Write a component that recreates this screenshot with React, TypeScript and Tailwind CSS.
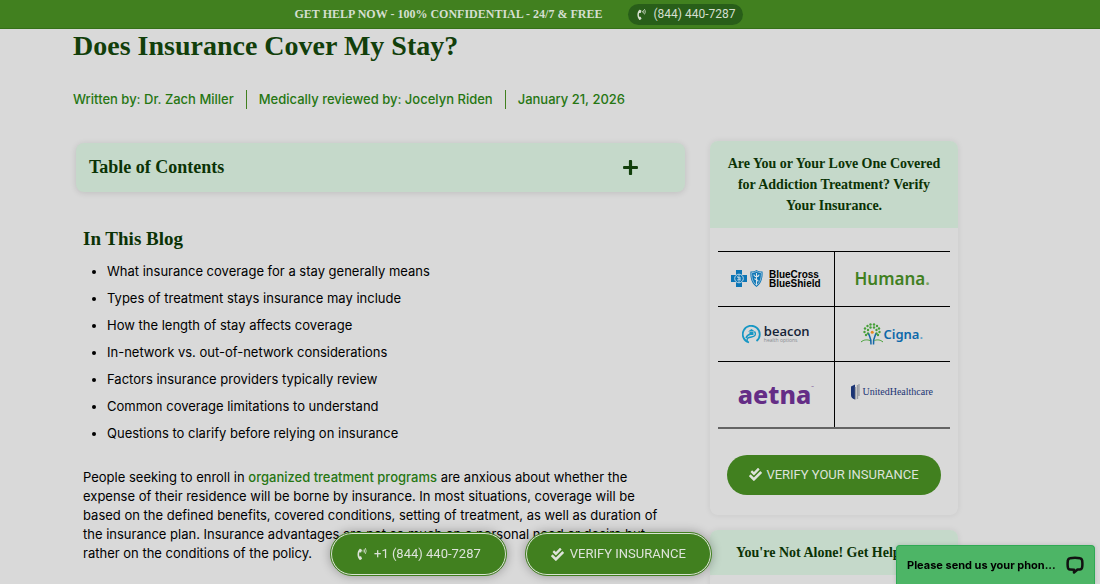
import type { ReactNode } from "react";
import { FaCheckDouble, FaPhoneVolume, FaPlus } from "react-icons/fa";

const topics = [
  "What insurance coverage for a stay generally means",
  "Types of treatment stays insurance may include",
  "How the length of stay affects coverage",
  "In-network vs. out-of-network considerations",
  "Factors insurance providers typically review",
  "Common coverage limitations to understand",
  "Questions to clarify before relying on insurance",
];

function BlueCross() {
  return (
    <div className="flex items-center gap-[5px]">
      <svg width="33" height="18" viewBox="0 0 33 18" aria-hidden="true">
        <path d="M5 0h6v5h5v7h-5v5H5v-5H0V5h5z" fill="#0b75b5" />
        <circle cx="8" cy="8.500" r="4.300" fill="#0b75b5" stroke="#c5d9e5" strokeWidth="1" />
        <path d="M8 5v7M6 7l4 1M6 10l4-1M6.500 6.500l3 4" stroke="#c5d9e5" strokeWidth=".8" fill="none" />
        <path d="M19.500 1.500C22 1.500 24 1 25.500 0c1.500 1 3.500 1.500 6 1.500.6 6-1 12-6 15.500-5-3.500-6.600-9.500-6-15.500z" fill="#0b75b5" />
        <path d="M20.700 2.600c2 0 3.500-.5 4.800-1.200 1.300.7 2.800 1.200 4.800 1.200.3 5-1 9.700-4.800 12.800-3.800-3.100-5.100-7.800-4.800-12.800z" fill="none" stroke="#c5d9e5" strokeWidth=".7" />
        <path d="M25.500 3v12M23 4.500c0 3 5 2.500 5 0M23.500 8.500c1 2 4 .5 3.500 3" stroke="#d9e3e9" strokeWidth="1.100" fill="none" />
      </svg>
      <div className="font-['Liberation_Sans',sans-serif] text-[10px] leading-[9px] font-bold text-black">
        BlueCross
        <br />
        BlueShield
      </div>
    </div>
  );
}

function Beacon() {
  return (
    <div className="flex items-center gap-[3px]">
      <svg width="19" height="19" viewBox="0 0 19 19" fill="none" aria-hidden="true">
        <path d="M7 17.500A8.500 8.500 0 1 1 14.500 16" stroke="#1797c4" strokeWidth="1.800" />
        <path d="M5.500 17c-1.500-4 .5-4.500 4-5 4-.5 5-3 3-5.500M4 13c1-3 2.500-3.500 5-4" stroke="#1797c4" strokeWidth="1.400" />
        <path d="M6 6.500 9.500 4 13 6.500zM7.500 7h4v3h-4z" fill="#1797c4" />
      </svg>
      <div className="flex flex-col">
        <span className="font-['Open_Sans',sans-serif] text-[13px] leading-[12px] font-semibold text-[#142337]">beacon</span>
        <span className="font-['Open_Sans',sans-serif] text-[5px] leading-[6px] text-[#858b90]">health options</span>
      </div>
    </div>
  );
}

const leaves = [
  [2, 9], [2.500, 5.500], [5, 3], [8, 1.500], [11.500, 1.500], [14.500, 3], [16.500, 5.500], [17, 9],
  [5.500, 7], [8, 4.500], [11.500, 4.500], [14, 7], [5.500, 10.500], [14, 10.500], [3.500, 12], [15.500, 12],
];

function Cigna() {
  return (
    <div className="flex items-center">
      <svg width="22" height="22" viewBox="0 0 22 22" aria-hidden="true">
        <g transform="translate(1.500 0)">
          {leaves.map(([x, y]) => (
            <circle key={`${x}-${y}`} cx={x} cy={y} r="1.200" fill="#46a038" />
          ))}
          <circle cx="9.700" cy="9.300" r="1.500" fill="#e68a25" />
        </g>
        <path d="M7.500 10.500c1 3 2.800 4 2.500 11M15 10.500c-1 3-2.800 4-2.500 11" stroke="#1668a8" strokeWidth="1.500" fill="none" />
        <path d="M0 19c3-2.500 6-2.500 9-1.500M22 19c-3-2.500-6-2.500-8.500-1.500" stroke="#46a038" strokeWidth="1" fill="none" />
      </svg>
      <span className="font-['Noto_Sans',sans-serif] text-[13px] leading-[18px] font-semibold text-[#0d68aa]">
        Cigna<span className="text-[#66a3ca]">.</span>
      </span>
    </div>
  );
}

function United() {
  return (
    <div className="flex items-center gap-[2px] pb-1">
      <svg width="9" height="17" viewBox="0 0 9 17" aria-hidden="true">
        <path d="M0 2.500 4 .5v15C1 15 0 13 0 11z" fill="#1b3474" />
        <path d="M4.500 3v12.500M6.500 1v14M8 0v12" stroke="#9a9da3" strokeWidth="1.300" />
      </svg>
      <span className="font-['Liberation_Serif',serif] text-[10px] leading-[14px] font-medium text-[#1b3474]">UnitedHealthcare</span>
    </div>
  );
}

function Cell({ children }: { children: ReactNode }) {
  return (
    <td className="h-[55px] w-1/2 border-t border-black p-0 not-first:border-l">
      <div className="flex items-center justify-center">{children}</div>
    </td>
  );
}

function Cta({ icon, children }: { icon: ReactNode; children: ReactNode }) {
  return (
    <a
      href="#contact"
      className="flex h-[42px] items-center gap-[6px] rounded-full border border-[#d9e4d3] bg-[#41801f] px-6 font-['Roboto',sans-serif] text-[13px] whitespace-nowrap text-[#dde3da] shadow-[0_0_10px_2px_rgba(0,0,0,0.25)] outline outline-[#41801f]"
    >
      {icon}
      {children}
    </a>
  );
}

export default function App() {
  return (
    <div className="h-screen overflow-hidden bg-[#d9d9d9] font-['Inter',sans-serif] text-[13px] text-black">
      <header className="flex h-[29px] items-center justify-center gap-[26px] border-b border-[#357018] bg-[#41801f] pr-[62px]">
        <p className="font-['Liberation_Serif',serif] text-[12px] font-bold text-[#d5dfd0]">GET HELP NOW - 100% CONFIDENTIAL - 24/7 &amp; FREE</p>
        <a href="tel:8444407287" className="flex h-[21px] items-center gap-[6px] rounded-full bg-[#285e19] px-2 font-['Roboto',sans-serif] text-[12px] text-[#d5dfd0]">
          <FaPhoneVolume className="size-[11px]" />
          (844) 440-7287
        </a>
      </header>

      <main className="pr-[142px] pl-[73px]">
        <h1 className="font-['Liberation_Serif',serif] text-[28px] leading-[34px] font-bold text-[#123f0b]">Does Insurance Cover My Stay?</h1>
        <div className="mt-[27px] flex h-[19px] items-center text-[13px] font-medium text-[#267612]">
          <span className="pr-3">Written by: Dr. Zach Miller</span>
          <span className="border-l border-[#41801f] px-3">Medically reviewed by: Jocelyn Riden</span>
          <span className="border-l border-[#41801f] px-3">January 21, 2026</span>
        </div>

        <div className="mt-8 flex items-start gap-[25px]">
          <article className="min-w-0 flex-1 pt-[2px]">
            <button className="ml-[3px] flex h-[49px] w-[calc(100%-3px)] items-center justify-between rounded-lg bg-[#c5d9ca] pr-[46px] pl-[13px] shadow-[0_1px_6px_rgba(0,0,0,0.12)]">
              <span className="font-['Liberation_Serif',serif] text-[18px] font-bold text-[#0b3305]">Table of Contents</span>
              <FaPlus className="size-[17px] text-[#123f0b]" />
            </button>
            <div className="px-[10px]">
              <h2 className="mt-[35px] font-['Liberation_Serif',serif] text-[19px] leading-[24px] font-bold text-[#0b3305]">In This Blog</h2>
              <ul className="mt-[7px] list-disc pl-6 text-[13px] leading-[27px]">
                {topics.map((t) => (
                  <li key={t}>{t}</li>
                ))}
              </ul>
              <p className="mt-[21px] text-[13px] leading-[19px]">
                People seeking to enroll in{" "}
                <a href="#programs" className="font-medium text-[#267612]">organized treatment programs</a> are anxious about whether the expense of their residence will be borne by insurance. In most situations, coverage will be based on the defined benefits, covered conditions, setting of treatment, as well as duration of the insurance plan. Insurance advantages are not so much on a personal need or desire but rather on the conditions of the policy.
              </p>
            </div>
          </article>

          <aside className="flex w-[248px] shrink-0 flex-col gap-[15px]">
            <section className="overflow-hidden rounded-lg shadow-[0_0_6px_rgba(0,0,0,0.08)]">
              <h2 className="bg-[#c5d9ca] px-3 py-3 text-center font-['Liberation_Serif',serif] text-[14px] leading-[21px] font-bold text-[#0b3305]">
                Are You or Your Love One Covered for Addiction Treatment? Verify Your Insurance.
              </h2>
              <div className="px-2 pt-[23px] pb-5">
                <table className="w-full table-fixed border-collapse border-b-2 border-[#646464]">
                  <tbody>
                    <tr>
                      <Cell><BlueCross /></Cell>
                      <Cell>
                        <span className="font-['Noto_Sans',sans-serif] text-[17px] leading-[24px] font-semibold text-[#41801f]">Humana<span className="text-[#7da460]">.</span></span>
                      </Cell>
                    </tr>
                    <tr>
                      <Cell><Beacon /></Cell>
                      <Cell><Cigna /></Cell>
                    </tr>
                    <tr className="h-[66px]">
                      <Cell>
                        <span className="font-['Noto_Sans',sans-serif] text-[25px] leading-[28px] font-extrabold text-[#642d86]">aetna</span>
                        <span className="mb-3 text-[4px] text-[#642d86]">™</span>
                      </Cell>
                      <Cell><United /></Cell>
                    </tr>
                  </tbody>
                </table>
                <a href="#verify" className="mx-[9px] mt-[26px] flex h-10 items-center justify-center gap-1 rounded-full bg-[#41801f] font-['Roboto',sans-serif] text-[13px] text-[#dde3da]">
                  <FaCheckDouble className="size-[13px]" />
                  VERIFY YOUR INSURANCE
                </a>
              </div>
            </section>
            <section className="rounded-lg shadow-[0_0_6px_rgba(0,0,0,0.08)]">
              <h2 className="rounded-t-lg bg-[#c5d9ca] px-[26px] py-3 font-['Liberation_Serif',serif] text-[14px] leading-[21px] font-bold whitespace-nowrap text-[#0b3305]">
                You're Not Alone! Get Help Now
              </h2>
              <div className="h-20" />
            </section>
          </aside>
        </div>
      </main>

      <div className="fixed bottom-[9px] left-[331px] flex gap-5">
        <Cta icon={<FaPhoneVolume className="size-[12px]" />}>+1 (844) 440-7287</Cta>
        <Cta icon={<FaCheckDouble className="size-[13px]" />}>VERIFY INSURANCE</Cta>
      </div>

      <button className="fixed right-[5px] bottom-0 flex h-[39px] w-[199px] items-center justify-between rounded-t-[4px] border border-b-0 border-[#2fa954] bg-[#4db566] px-[10px] text-[11px] font-bold whitespace-nowrap text-black shadow-[0_0_4px_rgba(0,0,0,0.15)]">
        Please send us your phon...
        <svg width="18" height="18" viewBox="0 0 18 18" fill="none" stroke="#111" strokeWidth="2.500" strokeLinejoin="round" aria-hidden="true">
          <path d="M4 2.200Q9 1.200 14 2.200Q16 2.500 16.200 5Q16.600 8 16.200 11Q16 13.500 13.500 13.500H11.500L8 16.500V13.800L4 13.500Q2 13.500 1.800 11Q1.400 8 1.800 5Q2 2.500 4 2.200Z" />
        </svg>
      </button>
    </div>
  );
}
